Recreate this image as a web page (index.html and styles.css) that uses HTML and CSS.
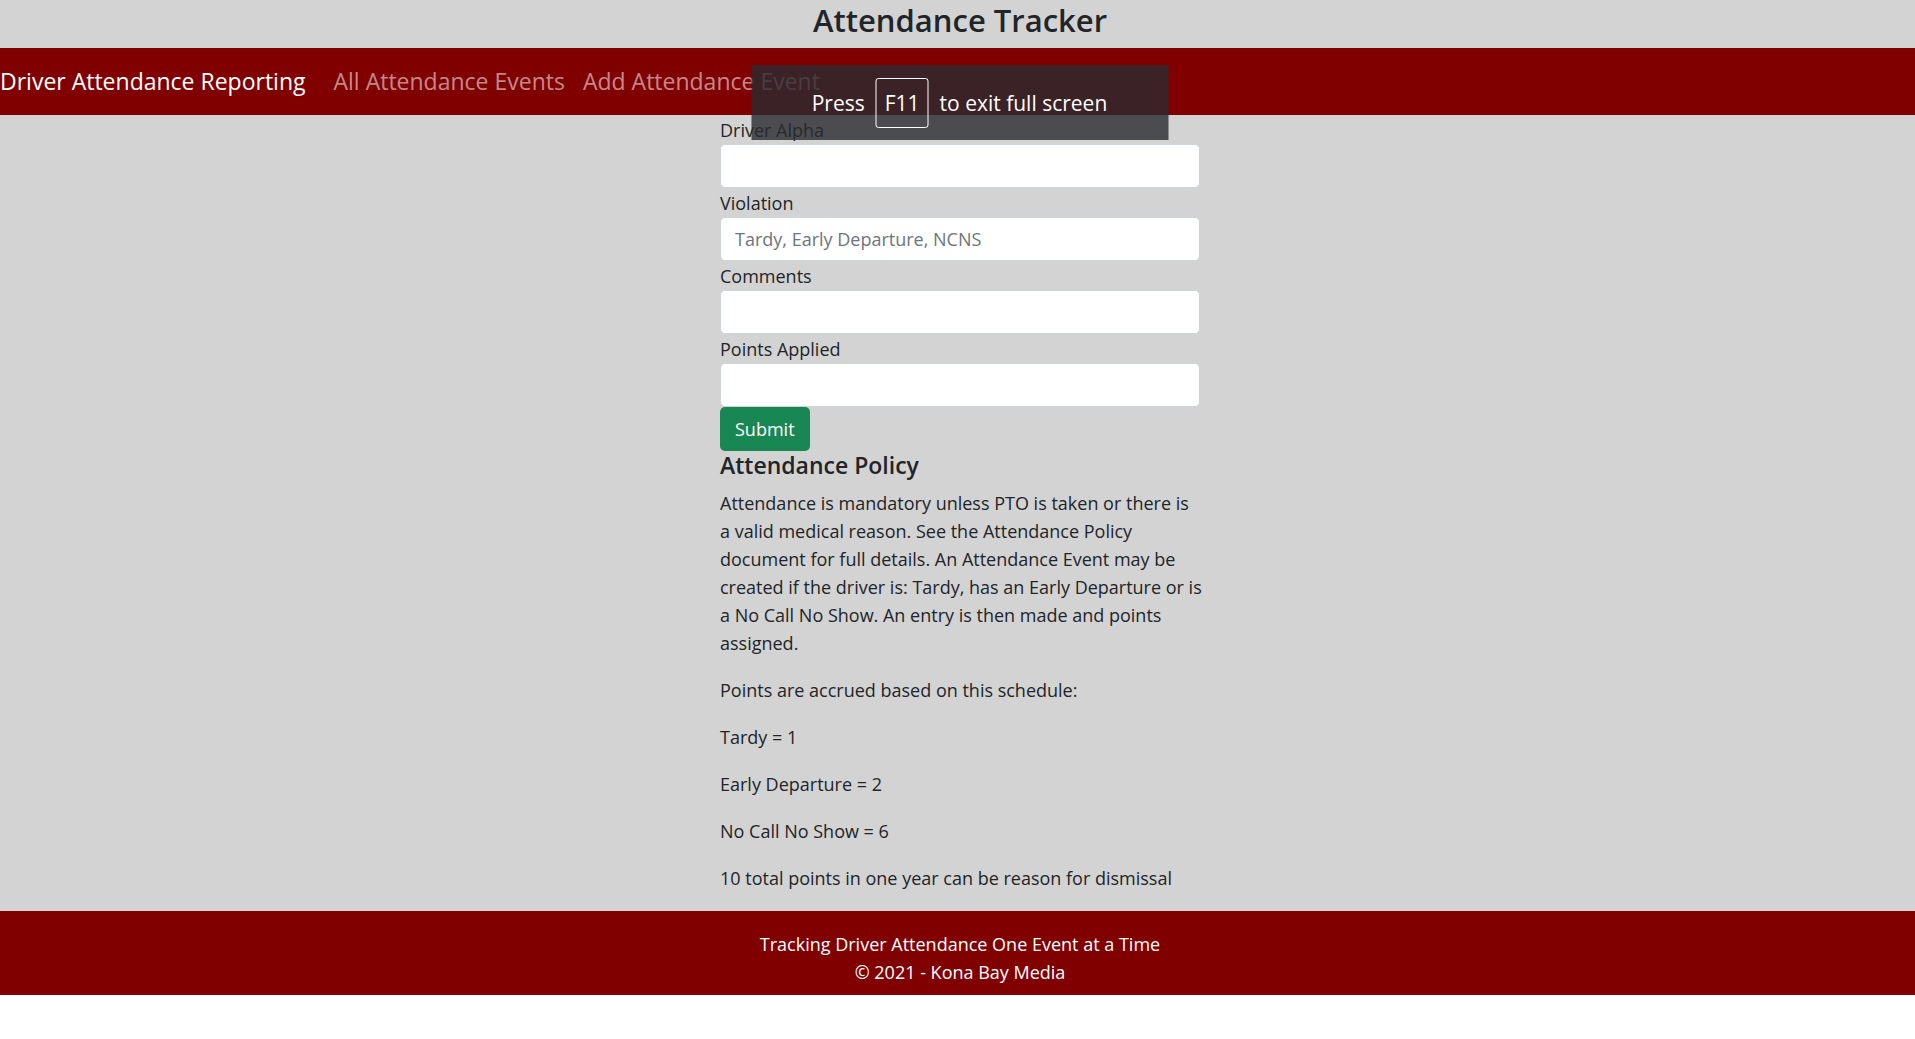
FILE: index.html
```html
<!DOCTYPE html>
<html lang="en">
<head>
  <meta charset="utf-8">
  <meta name="viewport" content="width=device-width, initial-scale=1">
  <title>Attendance Tracker</title>
  <link rel="stylesheet" href="styles.css">
</head>
<body>
  <div class="page">
    <header class="site-header">
      <h1 class="site-title">Attendance Tracker</h1>
    </header>
    <nav class="navbar">
      <a class="brand" href="#">Driver Attendance Reporting</a>
      <a class="nav-link" href="#">All Attendance Events</a>
      <a class="nav-link" href="#">Add Attendance Event</a>
    </nav>
    <main class="content">
      <div class="column">
        <form class="event-form">
          <label class="label" for="driver">Driver Alpha</label>
          <input class="field" id="driver" type="text">
          <label class="label" for="violation">Violation</label>
          <input class="field" id="violation" type="text" placeholder="Tardy, Early Departure, NCNS">
          <label class="label" for="comments">Comments</label>
          <input class="field" id="comments" type="text">
          <label class="label" for="points">Points Applied</label>
          <input class="field" id="points" type="text">
          <button class="submit" type="submit">Submit</button>
        </form>
        <section class="policy">
          <h2 class="policy-title">Attendance Policy</h2>
          <p>Attendance is mandatory unless PTO is taken or there is a&nbsp;valid medical reason. See the Attendance Policy document for full details. An Attendance Event may be created if the driver is: Tardy, has an Early Departure or is a&nbsp;No Call No Show. An entry is then made and points assigned.</p>
          <p>Points are accrued based on this schedule:</p>
          <p>Tardy = 1</p>
          <p>Early Departure = 2</p>
          <p>No Call No Show = 6</p>
          <p>10 total points in one year can be reason for dismissal</p>
        </section>
      </div>
    </main>
    <footer class="site-footer">
      <div>Tracking Driver Attendance One Event at a Time</div>
      <div>© 2021 - Kona Bay Media</div>
    </footer>
  </div>
  <div class="fullscreen-hint" role="status">
    <span>Press</span>
    <kbd class="key">F11</kbd>
    <span>to exit full screen</span>
  </div>
</body>
</html>
```
FILE: styles.css
```css
*,
*::before,
*::after {
  box-sizing: border-box;
}

body {
  margin: 0;
  background: #fff;
  color: #212529;
  font-family: "Segoe UI", "Open Sans", "Noto Sans", sans-serif;
  font-size: 18px;
  line-height: 28px;
}

.page {
  background: lightgray;
}

.site-header {
  padding: 0 0 8px 5px;
  text-align: center;
}

.site-title {
  margin: 0;
  font-size: 31px;
  font-weight: 600;
  line-height: 40px;
}

.navbar {
  display: flex;
  align-items: center;
  padding: 16px 0;
  background: maroon;
  font-size: 23px;
  line-height: 35px;
}

.brand {
  margin-right: 19px;
  color: #fff;
  text-decoration: none;
}

.nav-link {
  padding: 0 9px;
  color: rgba(255, 255, 255, 0.55);
  text-decoration: none;
}

.content {
  display: flex;
  justify-content: center;
  padding-left: 5px;
}

.column {
  width: 100%;
  max-width: 480px;
}

.event-form {
  display: flex;
  flex-direction: column;
  align-items: flex-start;
}

.label {
  padding-top: 1px;
}

.field {
  width: 100%;
  height: 44px;
  padding: 7px 14px;
  border: 1px solid #ced4da;
  border-radius: 5px;
  background: #fff;
  color: #212529;
  font: inherit;
}

.field::placeholder {
  color: #6c757d;
  opacity: 1;
}

.submit {
  height: 44px;
  padding: 0 15px;
  border: 0;
  border-radius: 5px;
  background: #198754;
  color: #fff;
  font: inherit;
}

.policy {
  margin-right: -8px;
}

.policy-title {
  margin: 0 0 9px;
  font-size: 23px;
  font-weight: 600;
  line-height: 29px;
}

.policy p {
  margin: 0 0 19px;
}

.site-footer {
  padding: 19px 0 9px 5px;
  background: maroon;
  color: #fff;
  text-align: center;
}

.fullscreen-hint {
  position: absolute;
  top: 65px;
  left: calc(50% + 2px);
  display: flex;
  align-items: center;
  justify-content: center;
  gap: 11px;
  width: 417px;
  height: 75px;
  transform: translateX(-50%);
  background: rgba(41, 43, 48, 0.8);
  color: #fff;
  font-size: 21px;
}

.key {
  padding: 10px 8px;
  border: 1px solid #fff;
  border-radius: 3px;
  font: inherit;
}
```
